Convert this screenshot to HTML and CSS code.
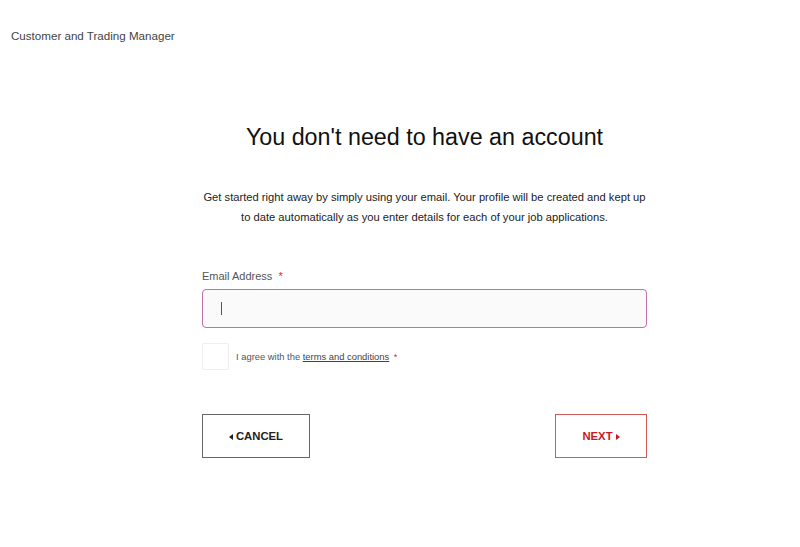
FILE: index.html
```html
<!DOCTYPE html>
<html>
<head>
<meta charset="utf-8">
<link rel="stylesheet" href="styles.css">
</head>
<body>
<header class="topbar">Customer and Trading Manager</header>
<main class="main">
  <h1 class="title">You don't need to have an account</h1>
  <p class="intro">Get started right away by simply using your email. Your profile will be created and kept up to date automatically as you enter details for each of your job applications.</p>
  <label class="label" for="email">Email Address <span class="req">*</span></label>
  <div class="input"><span class="caret"></span></div>
  <div class="agree">
    <span class="checkbox"></span>
    <span class="agree-text">I agree with the <span class="link">terms and conditions</span> <span class="req">*</span></span>
  </div>
  <div class="actions">
    <button class="btn btn-cancel"><span class="tri tri-left"></span>CANCEL</button>
    <button class="btn btn-next">NEXT<span class="tri tri-right"></span></button>
  </div>
</main>
</body>
</html>
```
FILE: styles.css
```css
html, body {
  margin: 0;
  padding: 0;
  background: #fff;
  font-family: "Liberation Sans", Arial, sans-serif;
}
.topbar {
  padding: 29px 0 0 11px;
  font-size: 11.6px;
  line-height: 14px;
  color: #444;
}
.main {
  width: 445px;
  margin-left: 202px;
  padding-top: 80px;
}
.title {
  margin: 0;
  text-align: center;
  font-weight: normal;
  font-size: 23.3px;
  line-height: 28px;
  color: #111;
}
.intro {
  margin: 36px -4px 0;
  text-align: center;
  font-size: 11.2px;
  line-height: 20px;
  color: #222;
}
.label {
  display: block;
  margin-top: 42px;
  font-size: 11px;
  line-height: 14px;
  color: #555;
}
.req {
  color: #d0312d;
  margin-left: 3px;
}
.input {
  box-sizing: border-box;
  margin-top: 6px;
  height: 39px;
  border: 1.5px solid #c070a8;
  border-radius: 4px;
  background: #fafafa;
  display: flex;
  align-items: center;
  padding-left: 18px;
}
.caret {
  width: 1px;
  height: 13px;
  background: #555;
}
.agree {
  margin-top: 15px;
  display: flex;
  align-items: center;
  gap: 7px;
}
.checkbox {
  width: 25px;
  height: 25px;
  border: 1px solid #eee;
  border-radius: 2px;
  background: #fff;
}
.agree-text {
  font-size: 9.4px;
  color: #555;
}
.link {
  text-decoration: underline;
  color: #444;
}
.agree-text .req {
  margin-left: 2px;
}
.actions {
  margin-top: 44px;
  display: flex;
  justify-content: space-between;
}
.btn {
  height: 44px;
  background: #fff;
  font-family: "Liberation Sans", Arial, sans-serif;
  font-weight: bold;
  font-size: 11.3px;
  display: flex;
  align-items: center;
  justify-content: center;
  gap: 3px;
  padding: 0;
  cursor: pointer;
}
.btn-cancel {
  width: 108px;
  border: 1px solid #666;
  color: #222;
}
.btn-next {
  width: 92px;
  border: 1px solid #d05a55;
  color: #c8191e;
}
.tri {
  display: inline-block;
  width: 0;
  height: 0;
  border-top: 3.5px solid transparent;
  border-bottom: 3.5px solid transparent;
  margin-top: 2px;
}
.tri-left {
  border-right: 4px solid #222;
}
.tri-right {
  border-left: 4px solid #c8191e;
}
```
